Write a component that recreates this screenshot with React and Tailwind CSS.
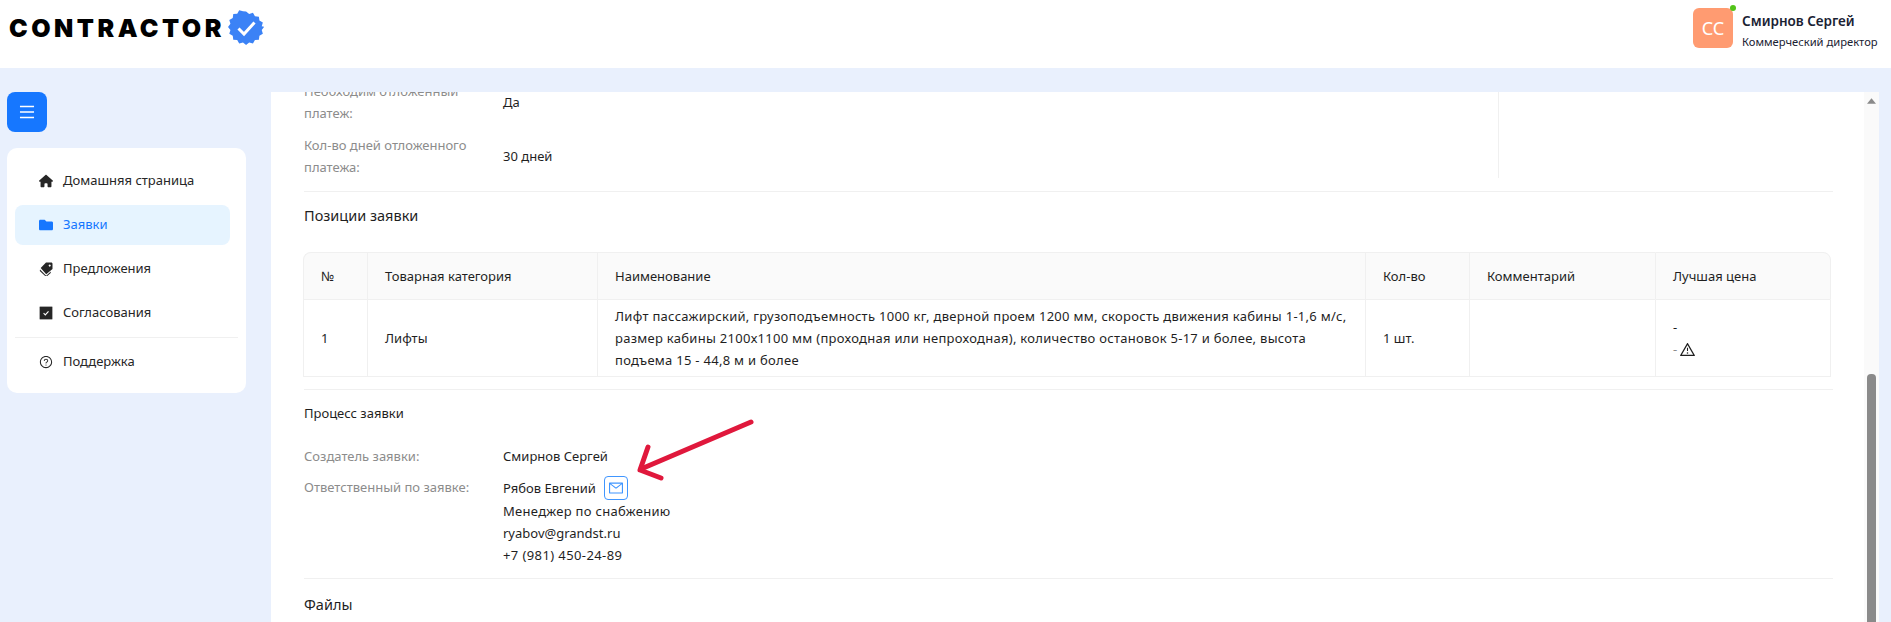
import React from 'react';
import { FaFolder } from 'react-icons/fa';
import { FaHouse } from 'react-icons/fa6';
import { AiOutlineQuestionCircle, AiOutlineMenu, AiOutlineMail, AiOutlineWarning } from 'react-icons/ai';

const font = { fontFamily: '"Noto Sans", sans-serif' };

const TagsIcon = ({ className }) => (
  <svg viewBox="0 0 14 14" className={`w-[14px] h-[14px] ${className}`} fill="currentColor">
    <path fillRule="evenodd" d="M7 .5h5.2c.7 0 1.3.6 1.3 1.3V7L7.2 12.3 1.7 6.1zM10.7 2.4a1 1 0 1 0 .01 0z" />
    <path d="M1 7.6l6.2 6.2 4.6-4.4-.1 1.5-4.5 4.1L.8 9z" />
  </svg>
);

const CheckIcon = ({ className }) => (
  <svg viewBox="0 0 14 14" className={`w-[14px] h-[14px] ${className}`}>
    <rect x=".5" y=".5" width="13" height="13" rx="1" fill="#262626" stroke="#bfbfbf" strokeWidth=".6" />
    <path d="M4.6 7.2l1.7 1.7 3.2-3.6" fill="none" stroke="#fff" strokeWidth="1.1" />
  </svg>
);

const menuItems = [
  { label: 'Домашняя страница', icon: FaHouse },
  { label: 'Заявки', icon: FaFolder, active: true },
  { label: 'Предложения', icon: TagsIcon },
  { label: 'Согласования', icon: CheckIcon },
];

const Logo = () => (
  <div className="flex items-center">
    <span className="font-['Inter'] font-black text-[25px] leading-none tracking-[3.5px] text-black">CONTRACTOR</span>
    <svg viewBox="0 0 36 36" className="w-[36px] h-[36px] ml-[3px]">
      <path
        fill="#3b82f6"
        d="M18 0l3.6 2.9 4.4-1.3 2.3 4 4.6.5.6 4.6 4 2.3-1.3 4.4L39 18l-2.8 3.6 1.3 4.4-4 2.3-.6 4.6-4.6.5-2.3 4-4.4-1.3L18 39l-3.6-2.9-4.4 1.3-2.3-4-4.6-.5-.6-4.6-4-2.3 1.3-4.4L-3 18l2.8-3.6-1.3-4.4 4-2.3.6-4.6 4.6-.5 2.3-4 4.4 1.3z"
        transform="translate(2.6 1.4) scale(.86)"
      />
      <path d="M10.5 18.5l5.5 5.5 10.5-11.5" fill="none" stroke="#fff" strokeWidth="3" />
    </svg>
  </div>
);

const Sidebar = () => (
  <aside className="w-[239px] ml-[7px] mr-[25px] shrink-0">
    <button className="w-[40px] h-[40px] rounded-[8px] bg-[#1677ff] flex items-center justify-center text-white">
      <AiOutlineMenu size={18} />
    </button>
    <div className="mt-[16px] bg-white rounded-[10px] px-[8px] pt-[13px] pb-[12px] h-[245px]">
      {menuItems.map((item) => {
        const Icon = item.icon;
        return (
          <div
            key={item.label}
            className={`h-[40px] mb-[4px] w-[215px] rounded-[8px] pl-[24px] flex items-center gap-[10px] text-[13px] ${item.active ? 'bg-[#e6f4ff] text-[#1677ff]' : 'text-[#262626]'}`}
          >
            <Icon size={14} className="shrink-0" />
            <span>{item.label}</span>
          </div>
        );
      })}
      <div className="h-px bg-[#f0f0f0] mt-[4px] mb-[4px]" />
      <div className="h-[40px] rounded-[8px] pl-[24px] flex items-center gap-[10px] text-[13px] text-[#262626]">
        <AiOutlineQuestionCircle size={14} className="shrink-0" />
        <span>Поддержка</span>
      </div>
    </div>
  </aside>
);

const Row = ({ label, children, className = '' }) => (
  <div className={`flex text-[13px] leading-[22px] ${className}`}>
    <div className="w-[199px] shrink-0 pr-[27px] text-[#8c8c8c]">{label}</div>
    <div className="text-[#1f1f1f]">{children}</div>
  </div>
);

const PositionsTable = () => (
  <table className="w-[1528px] table-fixed border-separate border-spacing-0 text-[13px] leading-[22px] text-[#1f1f1f]">
    <thead>
      <tr className="h-[48px] bg-[#fafafa] text-left">
        <th className="w-[64px] pl-[17px] font-normal border border-r-0 border-[#f0f0f0] rounded-tl-[8px]">№</th>
        <th className="w-[230px] pl-[17px] font-normal border border-r-0 border-[#f0f0f0]">Товарная категория</th>
        <th className="w-[768px] pl-[17px] font-normal border border-r-0 border-[#f0f0f0]">Наименование</th>
        <th className="w-[104px] pl-[17px] font-normal border border-r-0 border-[#f0f0f0]">Кол-во</th>
        <th className="w-[186px] pl-[17px] font-normal border border-r-0 border-[#f0f0f0]">Комментарий</th>
        <th className="pl-[17px] font-normal border border-[#f0f0f0] rounded-tr-[8px]">Лучшая цена</th>
      </tr>
    </thead>
    <tbody>
      <tr className="h-[77px]">
        <td className="pl-[17px] border-l border-b border-[#f0f0f0]">1</td>
        <td className="pl-[17px] border-l border-b border-[#f0f0f0]">Лифты</td>
        <td className="pl-[17px] pr-[17px] tracking-[0.28px] border-l border-b border-[#f0f0f0]">
          Лифт пассажирский, грузоподъемность 1000 кг, дверной проем 1200 мм, скорость движения кабины 1-1,6 м/с,
          размер кабины 2100х1100 мм (проходная или непроходная), количество остановок 5-17 и более, высота
          подъема 15 - 44,8 м и более
        </td>
        <td className="pl-[17px] border-l border-b border-[#f0f0f0]">1 шт.</td>
        <td className="border-l border-b border-[#f0f0f0]"></td>
        <td className="pl-[17px] border-l border-r border-b border-[#f0f0f0]">
          <div>-</div>
          <div className="flex items-center gap-[2px]">
            <span className="text-[#8c8c8c]">-</span>
            <AiOutlineWarning size={17} />
          </div>
        </td>
      </tr>
    </tbody>
  </table>
);

const App = () => (
  <div className="h-[622px] overflow-hidden bg-[#e9f0fd]" style={font}>
    <header className="h-[68px] bg-white flex items-start justify-between pl-[9px] pr-[10px]">
      <div className="pt-[10px]">
        <Logo />
      </div>
      <div className="flex items-start gap-[9px] pt-[8px]">
        <div className="relative w-[40px] h-[40px] rounded-[6px] bg-[#ff9b71] flex items-center justify-center text-white text-[18px]">
          СС
          <span className="absolute -top-[3px] -right-[3px] w-[6px] h-[6px] rounded-full bg-[#52c41a]" />
        </div>
        <div className="w-[139px] pt-[2px]">
          <div className="text-[13.5px] leading-[22px] font-semibold text-[#1a2233]">Смирнов Сергей</div>
          <div className="text-[11.2px] leading-[16px] mt-[2px] text-[#1a2233]">Коммерческий директор</div>
        </div>
      </div>
    </header>

    <div className="flex pt-[24px]">
      <Sidebar />
      <main className="w-[1608px] h-[530px] bg-white flex overflow-hidden">
        <div className="flex-1 pl-[33px] pr-[31px] -mt-[12px]">
          <div className="w-[1195px] border-r border-[#f0f0f0] flex flex-col gap-[10px]">
            <Row label="Необходим отложенный платеж:" className="items-center">Да</Row>
            <Row label="Кол-во дней отложенного платежа:" className="items-center">30 дней</Row>
          </div>
          <div className="w-[1529px] border-t border-[#f0f0f0] mt-[13px] pt-[12px]">
            <h3 className="text-[14.5px] leading-[22px] text-[#1f1f1f]">Позиции заявки</h3>
          </div>
          <div className="mt-[26px] -ml-px">
            <PositionsTable />
          </div>
          <div className="w-[1529px] border-t border-[#f0f0f0] mt-[12px] pt-[12px]">
            <h3 className="text-[13px] leading-[22px] text-[#1f1f1f]">Процесс заявки</h3>
          </div>
          <Row label="Создатель заявки:" className="mt-[21px]">Смирнов Сергей</Row>
          <Row label="Ответственный по заявке:" className="mt-[9px]">
            <div className="flex items-center">
              Рябов Евгений
              <button className="ml-[8px] w-[24px] h-[24px] border border-[#4096ff] rounded-[4px] flex items-center justify-center text-[#4096ff]">
                <AiOutlineMail size={16} />
              </button>
            </div>
            <div className="tracking-[0.3px]">Менеджер по снабжению</div>
            <div>ryabov@grandst.ru</div>
            <div className="tracking-[0.4px]">+7 (981) 450-24-89</div>
          </Row>
          <div className="w-[1529px] border-t border-[#f0f0f0] mt-[12px] pt-[14px]">
            <h3 className="text-[14.5px] leading-[22px] text-[#1f1f1f]">Файлы</h3>
          </div>
        </div>
        <div className="w-[15px] shrink-0 bg-[#fafafa] flex flex-col items-center">
          <svg viewBox="0 0 10 6" className="w-[9px] h-[6px] mt-[6px] fill-[#8a8a8a]"><path d="M5 0l5 6H0z" /></svg>
          <div className="w-[9px] h-[248px] mt-[270px] rounded-t-[4px] bg-[#8a8a8a]" />
        </div>
      </main>
    </div>

    {/* red annotation arrow on top of the screenshot */}
    <svg className="absolute left-[630px] top-[415px] w-[130px] h-[70px]" viewBox="630 415 130 70" fill="none" stroke="#e0183c" strokeWidth="5" strokeLinecap="round" strokeLinejoin="round">
      <path d="M751 422L641 469" />
      <path d="M648 447L640 470L661 478" />
    </svg>
  </div>
);

export default App;
